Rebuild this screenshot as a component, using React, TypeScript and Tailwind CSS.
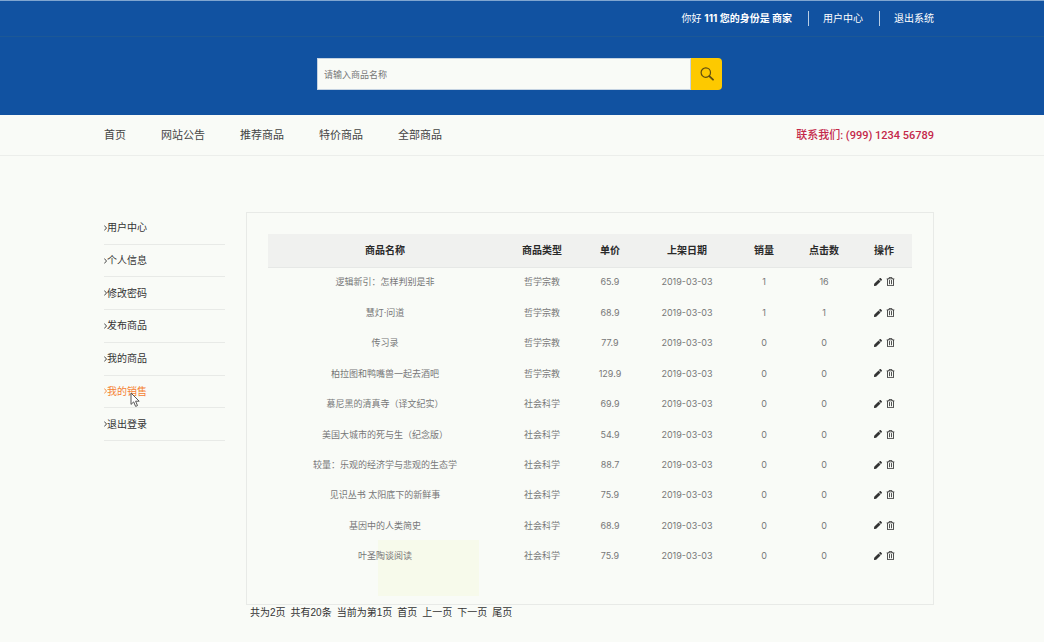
import { clsx } from "clsx";
import { FaPen, FaRegTrashAlt } from "react-icons/fa";

type TProduct = {
  name: string;
  type: string;
  price: string;
  date: string;
  sales: number;
  hits: number;
};

const navLinks = ["首页", "网站公告", "推荐商品", "特价商品", "全部商品"];

const menuLinks = [
  "用户中心",
  "个人信息",
  "修改密码",
  "发布商品",
  "我的商品",
  "我的销售",
  "退出登录",
];

const columns = [
  { title: "商品名称", width: "w-auto" },
  { title: "商品类型", width: "w-20" },
  { title: "单价", width: "w-14" },
  { title: "上架日期", width: "w-[98px]" },
  { title: "销量", width: "w-14" },
  { title: "点击数", width: "w-16" },
  { title: "操作", width: "w-14" },
];

const products: TProduct[] = [
  { name: "逻辑新引：怎样判别是非", type: "哲学宗教", price: "65.9", date: "2019-03-03", sales: 1, hits: 16 },
  { name: "慧灯·问道", type: "哲学宗教", price: "68.9", date: "2019-03-03", sales: 1, hits: 1 },
  { name: "传习录", type: "哲学宗教", price: "77.9", date: "2019-03-03", sales: 0, hits: 0 },
  { name: "柏拉图和鸭嘴兽一起去酒吧", type: "哲学宗教", price: "129.9", date: "2019-03-03", sales: 0, hits: 0 },
  { name: "慕尼黑的清真寺（译文纪实）", type: "社会科学", price: "69.9", date: "2019-03-03", sales: 0, hits: 0 },
  { name: "美国大城市的死与生（纪念版）", type: "社会科学", price: "54.9", date: "2019-03-03", sales: 0, hits: 0 },
  { name: "较量：乐观的经济学与悲观的生态学", type: "社会科学", price: "88.7", date: "2019-03-03", sales: 0, hits: 0 },
  { name: "见识丛书 太阳底下的新鲜事", type: "社会科学", price: "75.9", date: "2019-03-03", sales: 0, hits: 0 },
  { name: "基因中的人类简史", type: "社会科学", price: "68.9", date: "2019-03-03", sales: 0, hits: 0 },
  { name: "叶圣陶谈阅读", type: "社会科学", price: "75.9", date: "2019-03-03", sales: 0, hits: 0 },
];

const SearchIcon = () => (
  <svg viewBox="0 0 14 14" className="size-3.5" fill="none" stroke="#5f4d10" strokeLinecap="round">
    <circle cx="5.8" cy="5.6" r="4.7" strokeWidth="1.2" />
    <path d="M9.3 9.1 13 12.7" strokeWidth="1.8" />
  </svg>
);

const Chevron = () => (
  <svg viewBox="0 0 3 6" className="h-1.5 w-[3px]" fill="none" stroke="currentColor" strokeWidth="0.9">
    <path d="M0.3 0.5 2.5 3 0.3 5.5" />
  </svg>
);

const Pointer = () => (
  <svg viewBox="0 0 10 16" className="absolute left-[26px] top-4 h-4 w-2.5">
    <path
      d="M1 1v11.4l2.7-2.5 1.9 4.5 1.9-.8-1.9-4.4h3.6z"
      fill="#fff"
      stroke="#555"
      strokeWidth="1"
      strokeLinejoin="round"
    />
  </svg>
);

const Header = () => (
  <header className="border-t border-[#7fa5d0] bg-[#1152a1] text-white">
    <div className="border-b border-[#1c5896]">
      <div className="flex h-[35px] items-center justify-end pl-[104px] pr-[110px] text-[10px]">
        <p>
          你好 <b>111 您的身份是 商家</b>
        </p>
        <a href="#user" className="ml-4 border-l border-[#b9cde4] pl-3.5">
          用户中心
        </a>
        <a href="#logout" className="ml-4 border-l border-[#b9cde4] pl-3.5">
          退出系统
        </a>
      </div>
    </div>
    <div className="pb-[25px] pl-[105px] pr-[110px] pt-[21px]">
      <form className="mx-auto flex h-8 max-w-[405px]">
        <input
          type="text"
          aria-label="搜索商品"
          placeholder="请输入商品名称"
          className="min-w-0 flex-1 border border-[#c5d3e2] bg-[#f9fbf7] px-1.5 text-[9px] text-[#555] outline-none placeholder:text-[#777]"
        />
        <button
          type="button"
          aria-label="搜索"
          className="flex w-[31px] items-center justify-center rounded-r-sm bg-[#fdc900]"
        >
          <SearchIcon />
        </button>
      </form>
    </div>
  </header>
);

const Sidebar = () => (
  <ul className="grid h-[229px] w-[121px] shrink-0 auto-rows-fr">
    {menuLinks.map((label) => {
      const active = label === "我的销售";
      return (
        <li key={label} className="relative flex border-b border-[#e8eae7]">
          <a
            href="#menu"
            className={clsx(
              "flex items-center text-[10px]",
              active ? "text-[#f58233]" : "text-[#333]"
            )}
          >
            <Chevron />
            {label}
          </a>
          {active && <Pointer />}
        </li>
      );
    })}
  </ul>
);

const ProductTable = () => (
  <table className="relative h-[338px] w-full table-fixed text-center text-[9px] text-[#777]">
    <thead>
      <tr className="h-[33px] border-b border-[#e6e8e6] bg-[#f0f1ef] text-[10px] text-[#2a2a2a]">
        {columns.map((column) => (
          <th key={column.title} className={clsx("p-0 font-bold", column.width)}>
            {column.title}
          </th>
        ))}
      </tr>
    </thead>
    <tbody>
      {products.map((product) => (
        <tr key={product.name}>
          <td className="p-0 pb-0.5">{product.name}</td>
          <td className="p-0 pb-0.5">{product.type}</td>
          <td className="p-0 pb-0.5">{product.price}</td>
          <td className="p-0 pb-0.5">{product.date}</td>
          <td className="p-0 pb-0.5">{product.sales}</td>
          <td className="p-0 pb-0.5">{product.hits}</td>
          <td className="p-0 pb-0.5">
            <div className="flex items-center justify-center gap-1 text-[#333]">
              <button type="button" aria-label="编辑">
                <FaPen className="size-2" />
              </button>
              <button type="button" aria-label="删除">
                <FaRegTrashAlt className="size-[9px]" />
              </button>
            </div>
          </td>
        </tr>
      ))}
    </tbody>
  </table>
);

const App = () => {
  return (
    <div className="min-h-screen bg-[#f9fbf7] font-['Inter','Noto_Sans_CJK_SC',sans-serif] leading-[15px]">
      <Header />
      <nav className="border-b border-[#eceeeb]">
        <div className="flex h-10 items-center justify-between pl-[104px] pr-[110px] text-[11px]">
          <ul className="flex gap-[35px] text-[#444]">
            {navLinks.map((label) => (
              <li key={label}>
                <a href="#nav">{label}</a>
              </li>
            ))}
          </ul>
          <p className="font-['Roboto','Noto_Sans_CJK_SC',sans-serif] font-medium text-[#c4284a]">
            联系我们: (999) 1234 56789
          </p>
        </div>
      </nav>
      <main className="flex gap-[21px] pl-[104px] pr-[110px] pt-14">
        <Sidebar />
        <div className="min-w-0 flex-1">
          <section className="relative border border-[#e8eae7] px-[21px] pb-8 pt-[21px]">
            <div className="absolute bottom-2 left-[131px] h-14 w-[101px] bg-[#f7faeb]" />
            <ProductTable />
          </section>
          <div className="flex gap-[5px] pl-1 font-['Liberation_Sans','Noto_Sans_CJK_SC',sans-serif] text-[10px] text-[#333]">
            <span>共为2页</span>
            <span>共有20条</span>
            <span>当前为第1页</span>
            <a href="#first">首页</a>
            <a href="#prev">上一页</a>
            <a href="#next">下一页</a>
            <a href="#last">尾页</a>
          </div>
        </div>
      </main>
    </div>
  );
};

export default App;
